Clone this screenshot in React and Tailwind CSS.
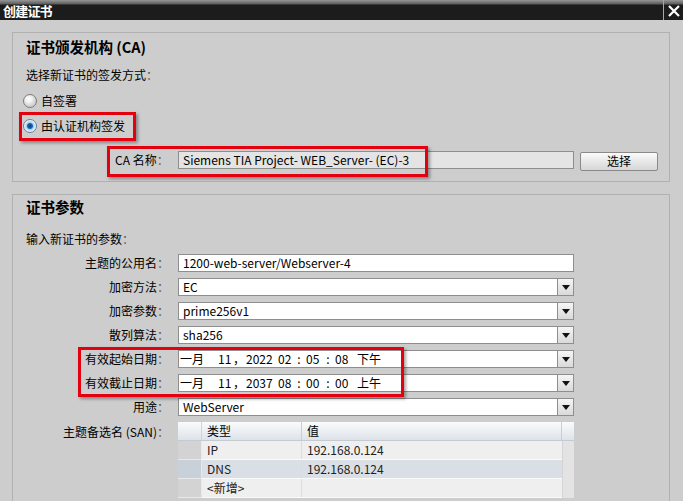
import React from "react";

function Caret() {
  return (
    <svg width="8" height="5" viewBox="0 0 8 5">
      <path d="M0 0 L8 0 L4 5 Z" fill="#111" />
    </svg>
  );
}

function TextField({ children, dropdown }) {
  if (!dropdown) {
    return (
      <div className="w-[396px] h-[18px] bg-white border border-[#8e8e8e] flex items-center pl-[4px] leading-[16px] whitespace-nowrap overflow-hidden">
        {children}
      </div>
    );
  }
  return (
    <div className="w-[396px] h-[18px] flex">
      <div className="flex-1 h-[18px] bg-white border border-[#8e8e8e] flex items-center pl-[4px] leading-[16px] whitespace-nowrap overflow-hidden">
        {children}
      </div>
      <div className="w-[16px] h-[18px] border border-l-0 border-[#8e8e8e] bg-[linear-gradient(to_bottom,#f6f6f6,#d9d9d9)] flex items-center justify-center">
        <Caret />
      </div>
    </div>
  );
}

function Label({ text }) {
  return (
    <>
      {text}
      <span className="text-[#555]">：</span>
    </>
  );
}

function Row({ label, children }) {
  return (
    <div className="flex h-[18px] items-center">
      <div className="w-[143px] text-right leading-[18px] whitespace-nowrap">
        <Label text={label} />
      </div>
      <div className="ml-[9px]">{children}</div>
    </div>
  );
}

function DateText({ year, h, m, s, ampm }) {
  const seg = (w, t, center) => (
    <span className={"inline-block shrink-0 " + (center ? "text-center" : "")} style={{ width: w }}>
      {t}
    </span>
  );
  return (
    <div className="flex items-center -ml-[3px]">
      {seg(38, "一月")}
      {seg(15, "11")}
      {seg(13, "，")}
      {seg(32, year)}
      {seg(14, h)}
      {seg(14, ":", true)}
      {seg(15, m)}
      {seg(14, ":", true)}
      {seg(22, s)}
      {seg(30, ampm)}
    </div>
  );
}

function Radio({ checked }) {
  return checked ? (
    <div className="w-[14px] h-[14px] rounded-full border border-[#6d7f92] bg-[radial-gradient(circle,#0e3f7c_0px,#1f63b1_2.5px,#a9d3f0_3.5px,#dff0fb_6.5px)] shadow-[inset_0_0_0_1px_rgba(255,255,255,0.6)]" />
  ) : (
    <div className="w-[14px] h-[14px] rounded-full border border-[#7c7c7c] bg-[radial-gradient(circle_at_40%_35%,#ffffff_0px,#f1f1f1_3px,#cfcfcf_7px)]" />
  );
}

export default function App() {
  return (
    <div className="relative w-[683px] h-[501px] overflow-hidden bg-[#cdcdcd] text-[12px] text-black font-['Noto_Sans_CJK_SC','Noto_Sans',sans-serif]">
      {/* title bar */}
      <div className="h-[20px] flex items-stretch justify-between bg-[linear-gradient(to_bottom,#979797_0px,#5c5c5c_4px,#1c1c1c_5px,#1c1c1c_100%)]">
        <div className="pl-[3px] pt-[2px] text-white font-bold text-[13px] leading-[17px] tracking-[-0.8px]">创建证书</div>
        <div className="w-[20px] border-l border-[#a8a8a8] flex items-center justify-center pt-[1px]">
          <svg width="12" height="12" viewBox="0 0 12 12">
            <path d="M1 1 L11 11 M11 1 L1 11" stroke="#fff" strokeWidth="2.2" />
          </svg>
        </div>
      </div>

      {/* body */}
      <div className="pl-[12px] pt-[12px]">
        {/* panel 1 */}
        <div className="w-[658px] h-[150px] border border-[#b1b1b1] pl-[13px] flex flex-col">
          <div className="mt-[4px] h-[20px] leading-[20px] font-bold text-[14.5px] whitespace-nowrap">证书颁发机构 (CA)</div>
          <div className="mt-[9px] h-[18px] leading-[18px]">
            <Label text="选择新证书的签发方式" />
          </div>
          <div className="mt-[8px] h-[18px] flex items-center -ml-[3px] gap-[4px]">
            <Radio />
            <span className="leading-[18px]">自签署</span>
          </div>
          <div className="mt-[7px] h-[18px] flex items-center -ml-[3px] gap-[4px]">
            <Radio checked />
            <span className="leading-[18px]">由认证机构签发</span>
          </div>
          <div className="mt-[16px] h-[18px] flex items-center">
            <div className="ml-[89px] w-[63px] leading-[18px] whitespace-nowrap">
              <Label text="CA 名称" />
            </div>
            <div className="w-[396px] h-[18px] bg-[#e4e4e4] border border-[#8e8e8e] flex items-center pl-[4px] whitespace-nowrap overflow-hidden">
              Siemens TIA Project- WEB_Server- (EC)-3
            </div>
            <div className="ml-[6px] w-[78px] h-[19px] mt-[2px] rounded-[2px] border border-[#8a8a8a] bg-[linear-gradient(to_bottom,#fbfbfb,#e4e4e4_60%,#d6d6d6)] flex items-center justify-center leading-[16px]">
              选择
            </div>
          </div>
        </div>

        {/* panel 2 */}
        <div className="mt-[12px] w-[658px] h-[320px] border border-[#b1b1b1] pl-[13px] flex flex-col">
          <div className="mt-[2px] h-[20px] leading-[20px] font-bold text-[14.5px]">证书参数</div>
          <div className="mt-[13px] h-[18px] leading-[18px]">
            <Label text="输入新证书的参数" />
          </div>
          <div className="mt-[6px] -ml-[13px] pl-[13px] flex flex-col gap-[6px]">
            <Row label="主题的公用名">
              <TextField>1200-web-server/Webserver-4</TextField>
            </Row>
            <Row label="加密方法">
              <TextField dropdown>EC</TextField>
            </Row>
            <Row label="加密参数">
              <TextField dropdown>prime256v1</TextField>
            </Row>
            <Row label="散列算法">
              <TextField dropdown>sha256</TextField>
            </Row>
            <Row label="有效起始日期">
              <TextField dropdown>
                <DateText year="2022" h="02" m="05" s="08" ampm="下午" />
              </TextField>
            </Row>
            <Row label="有效截止日期">
              <TextField dropdown>
                <DateText year="2037" h="08" m="00" s="00" ampm="上午" />
              </TextField>
            </Row>
            <Row label="用途">
              <TextField dropdown>WebServer</TextField>
            </Row>
            <div className="flex items-start">
              <div className="w-[143px] text-right leading-[19px] whitespace-nowrap">
                <Label text="主题备选名 (SAN)" />
              </div>
              <div className="ml-[9px] w-[396px] flex flex-col">
                {/* header */}
                <div className="flex h-[19px] bg-[linear-gradient(to_bottom,#fafbfc,#e9edf1_60%,#dde2e8)] border-b border-[#c4cad1]">
                  <div className="w-[24px] border-r border-[#d0d5db]" />
                  <div className="w-[100px] border-r border-[#c9ced5] pl-[5px] leading-[18px]">类型</div>
                  <div className="w-[260px] border-r border-[#c9ced5] pl-[5px] leading-[18px]">值</div>
                  <div className="flex-1" />
                </div>
                {[
                  { t: "IP", v: "192.168.0.124", sel: false },
                  { t: "DNS", v: "192.168.0.124", sel: true },
                  { t: "<新增>", v: "", sel: false },
                ].map((r, i) => (
                  <div key={i} className="flex h-[19px]">
                    <div
                      className={
                        "w-[24px] border-b border-r border-[#e9e9e9] " +
                        (r.sel ? "bg-[#c8d0d9]" : "bg-[#d3d3d3]")
                      }
                    />
                    <div
                      className={
                        "w-[360px] flex border-b border-[#fafafa] " +
                        (r.sel ? "bg-[#d9dfe5]" : "bg-[#efefef]")
                      }
                    >
                      <div className="w-[100px] pl-[5px] leading-[18px] border-r border-[#dcdcdc] text-[#222]">{r.t}</div>
                      <div className="flex-1 pl-[5px] leading-[18px] text-[#222]">{r.v}</div>
                    </div>
                    <div className="flex-1 bg-[#e3e3e3] border-l border-[#d4d4d4]" />
                  </div>
                ))}
              </div>
            </div>
          </div>
        </div>
      </div>

      {/* annotation boxes */}
      <div className="absolute left-[19px] top-[112px] w-[117px] h-[29px] border-[3px] border-[#e3000f] shadow-[2px_2px_3px_rgba(0,0,0,0.35)]" />
      <div className="absolute left-[107px] top-[146px] w-[321px] h-[31px] border-[3px] border-[#e3000f] shadow-[2px_2px_3px_rgba(0,0,0,0.35)]" />
      <div className="absolute left-[78px] top-[347px] w-[326px] h-[50px] border-[3px] border-[#e3000f] shadow-[2px_2px_3px_rgba(0,0,0,0.35)]" />
    </div>
  );
}
